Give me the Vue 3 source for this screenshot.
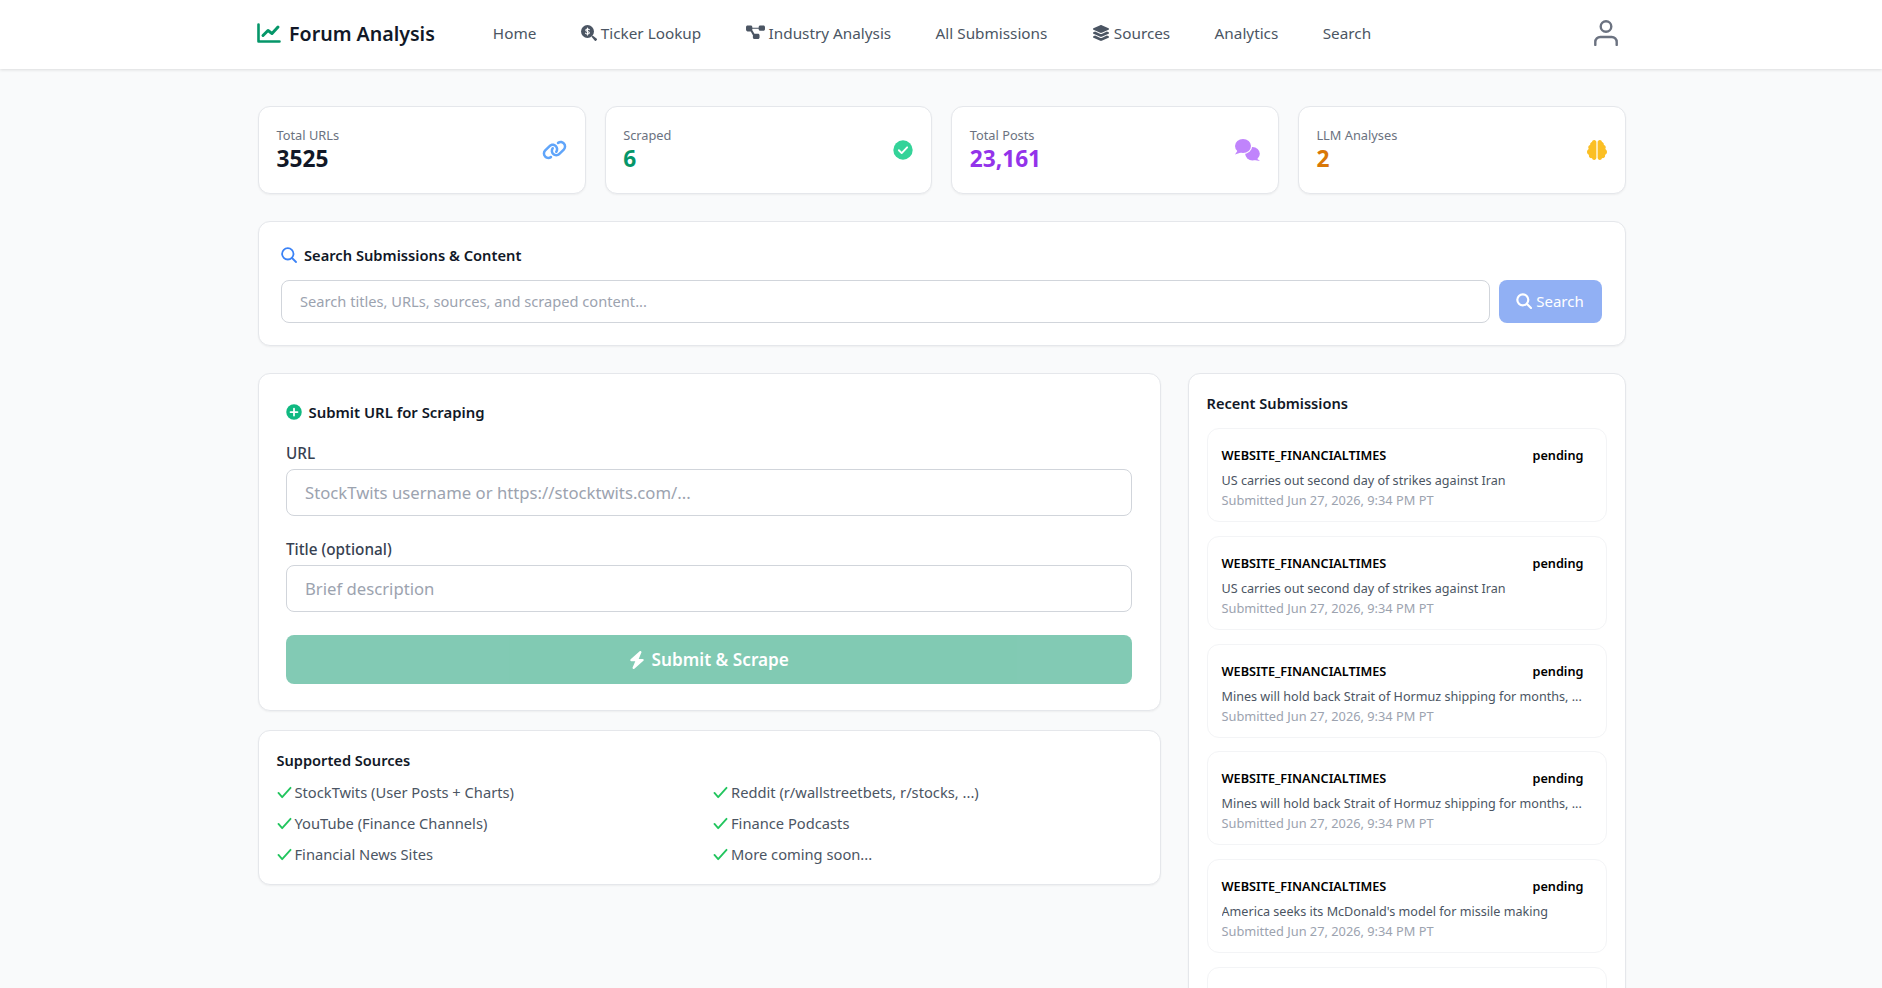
<script setup>
const navItems = [
  { label: 'Home' },
  { label: 'Ticker Lookup', icon: 'ticker' },
  { label: 'Industry Analysis', icon: 'diagram' },
  { label: 'All Submissions' },
  { label: 'Sources', icon: 'layers' },
  { label: 'Analytics' },
  { label: 'Search' }
];

const stats = [
  { label: 'Total URLs', value: '3525', tone: 'ink', icon: 'link' },
  { label: 'Scraped', value: '6', tone: 'green', icon: 'check' },
  { label: 'Total Posts', value: '23,161', tone: 'purple', icon: 'comments' },
  { label: 'LLM Analyses', value: '2', tone: 'amber', icon: 'brain' }
];

const sources = [
  'StockTwits (User Posts + Charts)',
  'Reddit (r/wallstreetbets, r/stocks, ...)',
  'YouTube (Finance Channels)',
  'Finance Podcasts',
  'Financial News Sites',
  'More coming soon...'
];

const submissions = [
  'US carries out second day of strikes against Iran',
  'US carries out second day of strikes against Iran',
  'Mines will hold back Strait of Hormuz shipping for months, ...',
  'Mines will hold back Strait of Hormuz shipping for months, ...',
  "America seeks its McDonald's model for missile making"
];
</script>

<template>
  <div class="page">
    <header class="topbar">
      <div class="topbar-inner">
        <div class="brand">
          <svg class="brand-icon" viewBox="0 0 24 20" fill="none" stroke="#059669" stroke-linecap="round" stroke-linejoin="round">
            <path stroke-width="2.600" d="M1.500 1.500v17h21" />
            <path stroke-width="3" d="M6 12.500l5-5 4 3 6-6.500" />
          </svg>
          <span>Forum Analysis</span>
        </div>
        <nav class="nav">
          <a v-for="item in navItems" :key="item.label" class="nav-link">
            <svg v-if="item.icon === 'ticker'" class="nav-icon" viewBox="0 0 512 512">
              <circle cx="208" cy="208" r="208" fill="#4b5563" />
              <path d="M336 372l36-36 133 107c9 9 9 25 0 34l-28 28c-9 9-25 9-34 0z" fill="#4b5563" />
              <path d="M268 152c-12-18-32-24-60-24-32 0-56 14-56 40 0 54 116 26 116 82 0 26-26 40-60 40-28 0-50-8-62-28M208 96v224" fill="none" stroke="#fff" stroke-width="36" stroke-linecap="round" />
            </svg>
            <svg v-else-if="item.icon === 'diagram'" class="nav-icon diagram" viewBox="0 16 576 480">
              <path fill="#4b5563" d="M0 80C0 53.500 21.500 32 48 32h96c26.500 0 48 21.500 48 48V96H384V80c0-26.500 21.500-48 48-48h96c26.500 0 48 21.500 48 48v64c0 26.500-21.500 48-48 48H432c-26.500 0-48-21.500-48-48V128H192v16c0 7.300-1.700 14.300-4.600 20.500l68.600 120c3.600-.3 7.300-.5 11-.5h96c26.500 0 48 21.500 48 48v64c0 26.500-21.500 48-48 48H256c-26.500 0-48-21.500-48-48V352c0-7.300 1.700-14.300 4.600-20.500l-68.600-120c-3.600 .3-7.300 .5-11 .5H48c-26.500 0-48-21.500-48-48V80z" />
            </svg>
            <svg v-else-if="item.icon === 'layers'" class="nav-icon layers" viewBox="0 0 576 512">
              <path fill="#4b5563" d="M264.500 5.200c14.900-6.900 32.100-6.900 47 0l218.600 101c8.500 3.900 13.900 12.400 13.900 21.800s-5.400 17.900-13.900 21.800l-218.600 101c-14.900 6.900-32.100 6.900-47 0L45.900 149.800C37.400 145.800 32 137.300 32 128s5.400-17.900 13.900-21.800L264.500 5.200zM476.900 209.600l53.200 24.600c8.500 3.900 13.900 12.400 13.900 21.800s-5.400 17.900-13.900 21.800l-218.600 101c-14.900 6.900-32.100 6.900-47 0L45.900 277.800C37.400 273.800 32 265.300 32 256s5.400-17.900 13.900-21.800l53.200-24.600 152 70.200c23.400 10.800 50.400 10.800 73.800 0l152-70.200zm-152 198.200l152-70.200 53.200 24.600c8.500 3.900 13.900 12.400 13.900 21.800s-5.400 17.900-13.900 21.800l-218.600 101c-14.900 6.900-32.100 6.900-47 0L45.900 405.800C37.400 401.800 32 393.300 32 384s5.400-17.900 13.900-21.800l53.200-24.600 152 70.200c23.400 10.800 50.400 10.800 73.800 0z" />
            </svg>
            <span>{{ item.label }}</span>
          </a>
        </nav>
        <svg class="user-icon" viewBox="0 0 24 26" fill="none" stroke="#6b7280" stroke-width="2.400" stroke-linecap="round">
          <circle cx="12" cy="6.500" r="5.300" />
          <path d="M1.300 25v-3a5 5 0 0 1 5-5h11.400a5 5 0 0 1 5 5v3" />
        </svg>
      </div>
    </header>

    <main class="content">
      <section class="stats">
        <div v-for="stat in stats" :key="stat.label" class="card stat">
          <div>
            <div class="stat-label">{{ stat.label }}</div>
            <div class="stat-value" :class="stat.tone">{{ stat.value }}</div>
          </div>
          <svg v-if="stat.icon === 'link'" class="stat-icon link" viewBox="0 0 640 512">
            <path fill="#60a5fa" d="M579.800 267.700c56.500-56.500 56.500-148 0-204.500c-50-50-128.800-56.500-186.300-15.400l-1.600 1.100c-14.400 10.300-17.700 30.300-7.400 44.600s30.300 17.700 44.600 7.400l1.600-1.100c32.100-22.900 76-19.300 103.800 8.600c31.500 31.500 31.500 82.500 0 114L422.300 334.800c-31.500 31.500-82.500 31.500-114 0c-27.900-27.900-31.500-71.800-8.600-103.800l1.100-1.600c10.300-14.400 6.900-34.400-7.400-44.600s-34.400-6.900-44.600 7.400l-1.100 1.600C206.500 251.200 213 330 263 380c56.500 56.500 148 56.500 204.500 0L579.800 267.700zM60.200 244.300c-56.500 56.500-56.500 148 0 204.500c50 50 128.800 56.500 186.300 15.400l1.600-1.100c14.400-10.300 17.700-30.300 7.400-44.600s-30.300-17.700-44.600-7.400l-1.600 1.100c-32.100 22.900-76 19.300-103.800-8.600C74 372 74 321 105.500 289.500L217.700 177.200c31.500-31.500 82.500-31.500 114 0c27.900 27.900 31.500 71.800 8.600 103.900l-1.100 1.600c-10.300 14.400-6.900 34.400 7.400 44.600s34.400 6.900 44.600-7.400l1.100-1.600C433.500 260.800 427 182 377 132c-56.500-56.500-148-56.500-204.500 0L60.200 244.300z" />
          </svg>
          <svg v-else-if="stat.icon === 'check'" class="stat-icon" viewBox="0 0 512 512">
            <circle cx="256" cy="256" r="248" fill="#34d399" />
            <path d="M150 262l72 72 140-146" fill="none" stroke="#fff" stroke-width="48" stroke-linecap="round" stroke-linejoin="round" />
          </svg>
          <svg v-else-if="stat.icon === 'comments'" class="stat-icon comments" viewBox="0 0 25 22">
            <ellipse cx="17.500" cy="14.800" rx="7.300" ry="6.800" fill="#c084fc" />
            <path d="M21 19l4 3-6-1z" fill="#c084fc" />
            <ellipse cx="8" cy="7" rx="9.200" ry="8.200" fill="#fff" />
            <ellipse cx="8" cy="7" rx="8" ry="7" fill="#c084fc" />
            <path d="M3 11L0 15.500l6-2z" fill="#c084fc" />
          </svg>
          <svg v-else class="stat-icon" viewBox="0 0 512 512">
            <path fill="#fbbf24" d="M184 0c30.900 0 56 25.100 56 56V456c0 30.900-25.100 56-56 56c-28.900 0-52.700-21.900-55.700-50.100c-5.200 1.400-10.700 2.100-16.300 2.100c-35.300 0-64-28.700-64-64c0-7.400 1.300-14.600 3.600-21.200C21.400 367.400 0 338.200 0 304c0-31.900 18.700-59.500 45.800-72.300C37.100 220.800 32 207 32 192c0-30.700 21.600-56.300 50.400-62.600C80.800 123.900 80 118 80 112c0-29.900 20.600-55.100 48.300-62.100C131.300 21.900 155.100 0 184 0zM328 0c28.900 0 52.600 21.900 55.700 49.900c27.800 7 48.300 32.100 48.300 62.100c0 6-.8 11.900-2.400 17.400c28.800 6.200 50.400 31.900 50.400 62.600c0 15-5.100 28.800-13.800 39.700C493.300 244.500 512 272.100 512 304c0 34.200-21.400 63.400-51.600 74.800c2.300 6.600 3.600 13.800 3.600 21.200c0 35.300-28.700 64-64 64c-5.600 0-11.100-.7-16.300-2.100c-3 28.200-26.800 50.100-55.700 50.100c-30.900 0-56-25.100-56-56V56c0-30.900 25.100-56 56-56z" />
          </svg>
        </div>
      </section>

      <section class="card search-card">
        <h2 class="section-title search-title">
          <svg class="title-icon" viewBox="0 0 16 16" fill="none" stroke="#3b82f6" stroke-width="1.800" stroke-linecap="round">
            <circle cx="6.800" cy="6.800" r="5.700" />
            <path d="M11 11l4 4" />
          </svg>
          Search Submissions &amp; Content
        </h2>
        <div class="search-row">
          <input class="search-input" type="text" placeholder="Search titles, URLs, sources, and scraped content..." />
          <button class="search-btn" type="button">
            <svg class="btn-search-icon" viewBox="0 0 16 16" fill="none" stroke="#fff" stroke-width="2.200" stroke-linecap="round">
              <circle cx="6.800" cy="6.800" r="5.500" />
              <path d="M11 11l4 4" />
            </svg>
            Search
          </button>
        </div>
      </section>

      <div class="columns">
        <div class="left-col">
          <section class="card submit-card">
            <h2 class="section-title submit-title">
              <svg class="title-icon" viewBox="0 0 512 512">
                <circle cx="256" cy="256" r="248" fill="#10b981" />
                <path d="M256 144v224M144 256h224" stroke="#fff" stroke-width="56" stroke-linecap="round" />
              </svg>
              Submit URL for Scraping
            </h2>
            <label class="field-label">URL</label>
            <input class="field-input" type="text" placeholder="StockTwits username or https://stocktwits.com/..." />
            <label class="field-label second">Title (optional)</label>
            <input class="field-input" type="text" placeholder="Brief description" />
            <button class="submit-btn" type="button">
              <svg class="bolt" viewBox="0 0 448 512">
                <path fill="#fff" d="M349.400 44.600c5.900-13.700 1.500-29.700-10.600-38.500s-28.600-8-39.900 1.800l-256 224c-10 8.800-13.600 22.900-8.900 35.300S50.700 288 64 288H175.500L98.600 467.400c-5.900 13.700-1.500 29.700 10.600 38.500s28.600 8 39.900-1.800l256-224c10-8.800 13.600-22.900 8.900-35.300s-16.600-20.700-30-20.700H272.500L349.400 44.600z" />
              </svg>
              Submit &amp; Scrape
            </button>
          </section>

          <section class="card sources-card">
            <h3 class="small-title">Supported Sources</h3>
            <ul class="source-list">
              <li v-for="source in sources" :key="source" class="source-item">
                <svg class="tick" viewBox="0 0 16 14" fill="none" stroke="#22c55e" stroke-width="2" stroke-linecap="round" stroke-linejoin="round">
                  <path d="M1.500 7.500l4 4.500L14.500 2" />
                </svg>
                {{ source }}
              </li>
            </ul>
          </section>
        </div>

        <aside class="card recent-card">
          <h3 class="small-title">Recent Submissions</h3>
          <div class="recent-list">
            <div v-for="(title, i) in submissions" :key="i" class="recent-item">
              <div class="recent-head">
                <span class="recent-source">WEBSITE_FINANCIALTIMES</span>
                <span class="recent-status">pending</span>
              </div>
              <div class="recent-title">{{ title }}</div>
              <div class="recent-date">Submitted Jun 27, 2026, 9:34 PM PT</div>
            </div>
            <div class="recent-item"></div>
          </div>
        </aside>
      </div>
    </main>
  </div>
</template>

<style scoped>
.page {
  min-height: 988px;
  background: #f9fafb;
  font-family: "Noto Sans", "Open Sans", sans-serif;
  color: #111827;
}

.topbar {
  height: 69px;
  background: #fff;
  box-shadow: 0 1px 3px rgba(0, 0, 0, 0.12);
}

.topbar-inner {
  max-width: 1369px;
  height: 66px;
  margin: 0 auto;
  padding-left: 1.500px;
  box-sizing: border-box;
  display: flex;
  align-items: center;
}

.brand {
  display: flex;
  align-items: center;
  gap: 8px;
  font-size: 19.600px;
  font-weight: 600;
  color: #111827;
}

.brand-icon {
  width: 24px;
  height: 20px;
  margin-left: -1px;
}

.nav {
  display: flex;
  align-items: center;
  gap: 44.400px;
  margin-left: 58px;
}

.nav-link {
  display: flex;
  align-items: center;
  gap: 4px;
  font-size: 15.300px;
  color: #4b5563;
}

.nav-icon {
  width: 16px;
  height: 16px;
}

.nav-icon.diagram {
  width: 19px;
  height: 15.800px;
}

.nav-icon.layers {
  width: 18px;
  height: 16px;
}

.user-icon {
  width: 24px;
  height: 26px;
  margin-left: auto;
  margin-right: 8px;
}

.content {
  max-width: 1369px;
  margin: 0 auto;
  padding: 37px 0 0 1.500px;
  box-sizing: border-box;
}

.card {
  background: #fff;
  border: 1px solid #e5e7eb;
  border-radius: 12px;
  box-shadow: 0 1px 2px rgba(0, 0, 0, 0.05);
  box-sizing: border-box;
}

.stats {
  display: grid;
  grid-template-columns: repeat(4, 1fr);
  gap: 19px;
}

.stat {
  height: 88px;
  padding: 0 18px 0 17.500px;
  display: flex;
  align-items: center;
  justify-content: space-between;
}

.stat-label {
  font-size: 12.800px;
  line-height: 18px;
  color: #6b7280;
}

.stat-value {
  font-size: 22.700px;
  font-weight: 700;
  line-height: 30px;
}

.stat-value.ink { color: #111827; }
.stat-value.green { color: #059669; }
.stat-value.purple { color: #9333ea; }
.stat-value.amber { color: #d97706; }

.stat-icon {
  width: 20px;
  height: 20px;
  flex-shrink: 0;
}

.stat-icon.link {
  width: 25px;
  height: 20px;
}

.stat-icon.comments {
  width: 25px;
  height: 22px;
}

.search-card {
  margin-top: 27px;
  height: 125px;
  padding: 21px 23px 21px 22px;
}

.section-title {
  display: flex;
  align-items: center;
  margin: 0;
  font-weight: 600;
}

.search-title {
  gap: 7px;
  font-size: 14.700px;
  line-height: 24px;
}

.title-icon {
  width: 16px;
  height: 16px;
}

.search-row {
  display: flex;
  gap: 9px;
  margin-top: 13px;
}

.search-input {
  flex: 1;
  min-width: 0;
  height: 43px;
  box-sizing: border-box;
  padding: 0 18px 2px;
  border: 1px solid #d1d5db;
  border-radius: 8px;
  font: 14.650px "Noto Sans", sans-serif;
  outline: none;
}

.search-input::placeholder,
.field-input::placeholder {
  color: #9ca3af;
  opacity: 1;
}

.search-btn {
  width: 103px;
  height: 43px;
  padding: 0 0 2px;
  display: flex;
  align-items: center;
  justify-content: center;
  gap: 4px;
  border: 0;
  border-radius: 8px;
  background: #2563eb;
  opacity: 0.5;
  color: #fff;
  font: 15px "Noto Sans", sans-serif;
}

.btn-search-icon {
  width: 16px;
  height: 16px;
}

.columns {
  display: grid;
  grid-template-columns: minmax(0, 1fr) 438px;
  gap: 27px;
  margin-top: 27px;
  align-items: start;
}

.left-col {
  display: flex;
  flex-direction: column;
  gap: 19px;
}

.submit-card {
  height: 338px;
  padding: 26px 28px 26px 27px;
}

.submit-title {
  gap: 6.500px;
  font-size: 14.900px;
  line-height: 24px;
  margin-bottom: 19px;
}

.field-label {
  display: block;
  font-size: 15.300px;
  font-weight: 500;
  line-height: 21px;
  color: #374151;
  margin-bottom: 5px;
}

.field-label.second {
  margin-top: 23px;
}

.field-input {
  display: block;
  width: 100%;
  height: 47px;
  box-sizing: border-box;
  padding: 0 18px 1px;
  border: 1px solid #d1d5db;
  border-radius: 8px;
  font: 16.700px "Noto Sans", sans-serif;
  outline: none;
}

.submit-btn {
  width: 100%;
  height: 49px;
  margin-top: 23px;
  display: flex;
  align-items: center;
  justify-content: center;
  gap: 7px;
  border: 0;
  border-radius: 8px;
  background: #059669;
  opacity: 0.5;
  color: #fff;
  font: 600 17.200px "Noto Sans", sans-serif;
}

.bolt {
  width: 16px;
  height: 18px;
}

.sources-card {
  height: 155px;
  padding: 18px 18px 18px 17.500px;
}

.small-title {
  margin: 0;
  font-size: 14.600px;
  font-weight: 600;
  line-height: 22px;
}

.source-list {
  list-style: none;
  margin: 10.500px 0 0;
  padding: 0;
  display: grid;
  grid-template-columns: 1fr 1fr;
  column-gap: 8px;
  row-gap: 9.700px;
}

.source-item {
  display: flex;
  align-items: center;
  gap: 3px;
  font-size: 14.700px;
  line-height: 21.500px;
  color: #4b5563;
}

.tick {
  width: 15px;
  height: 13px;
}

.recent-card {
  padding: 18px;
  min-height: 700px;
}

.recent-list {
  display: flex;
  flex-direction: column;
  gap: 13.800px;
  margin-top: 14px;
}

.recent-item {
  height: 94px;
  box-sizing: border-box;
  padding: 15px 14px 14px;
  border: 1px solid #f3f4f6;
  border-radius: 12px;
  flex-shrink: 0;
}

.recent-head {
  display: flex;
  justify-content: space-between;
  align-items: center;
  padding-right: 8px;
  font-size: 12.700px;
  font-weight: 600;
  line-height: 22px;
  color: #000;
}

.recent-title {
  margin-top: 5px;
  font-size: 12.600px;
  line-height: 19px;
  color: #4b5563;
  white-space: nowrap;
  overflow: hidden;
  text-overflow: ellipsis;
}

.recent-date {
  font-size: 12.800px;
  line-height: 20px;
  color: #9ca3af;
}
</style>

<style>
html,
body {
  margin: 0;
  overflow: hidden;
  background: #f9fafb;
}
</style>
